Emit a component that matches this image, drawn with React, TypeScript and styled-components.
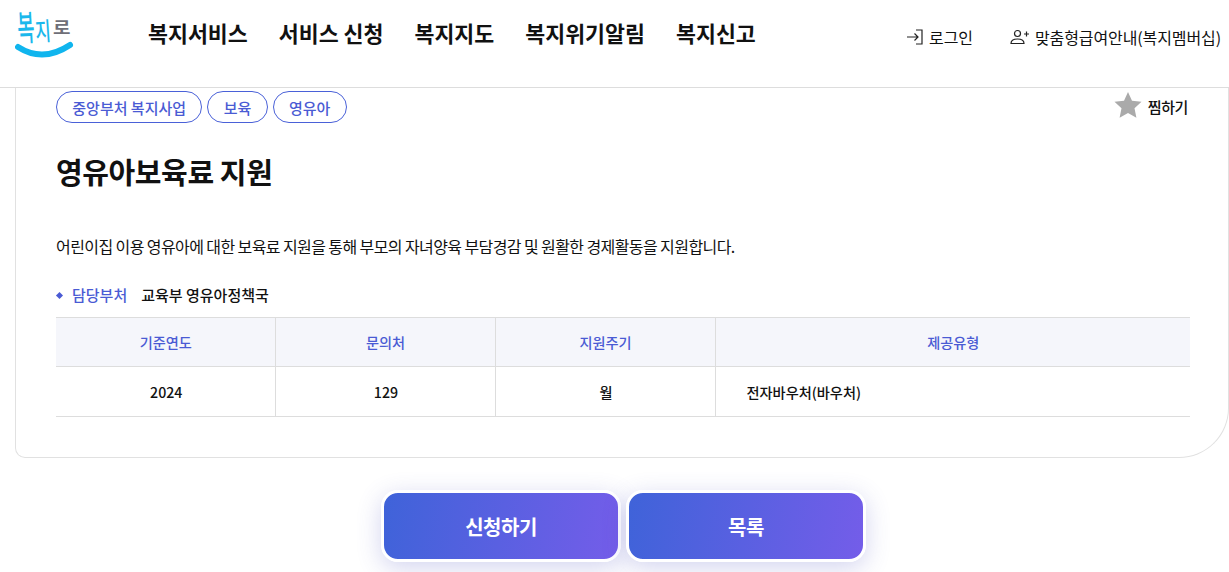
import React from 'react';
import styled, { createGlobalStyle } from 'styled-components';

const GlobalStyle = createGlobalStyle`
    html, body {
        margin: 0;
        height: 100%;
        overflow: hidden;
        background: #fff;
    }

    body {
        color: #111;
        font-family: "Noto Sans CJK KR", "Noto Sans", sans-serif;
    }

    * {
        box-sizing: border-box;
    }
`;

const Header = styled.header`
    align-items: flex-start;
    border-bottom: 1px solid #ddd;
    display: flex;
    height: 88px;
    padding-left: 15px;
`;

const LogoBox = styled.svg`
    display: block;
    flex: none;
    height: 60px;
    margin-right: 74px;
    width: 59px;
`;

const Nav = styled.nav`
    display: flex;
    gap: 31px;
    padding-top: 18px;
`;

const NavItem = styled.a`
    font-size: 21.7px;
    font-weight: 700;
    line-height: 30px;
    white-space: nowrap;
`;

const Utils = styled.div`
    display: flex;
    gap: 37px;
    margin-left: auto;
    padding: 25px 8px 0 0;
`;

const UtilLink = styled.a`
    align-items: center;
    display: flex;
    font-size: 16px;
    gap: 5px;
    height: 24px;
    letter-spacing: -0.1px;
    white-space: nowrap;
`;

const Card = styled.section`
    border: 1px solid #e1e1e1;
    border-radius: 0 0 50px 10px;
    border-top: 0;
    height: 370px;
    margin-left: 15px;
    padding: 3px 39px 0 40px;
`;

const TopRow = styled.div`
    align-items: center;
    display: flex;
    justify-content: space-between;
`;

const Tags = styled.ul`
    display: flex;
    gap: 5px;
    list-style: none;
    margin: 0;
    padding: 0;
`;

const Tag = styled.li`
    align-items: center;
    border: 1px solid #4a61d8;
    border-radius: 16px;
    color: #4a5bd4;
    display: flex;
    font-size: 15px;
    font-weight: 500;
    height: 32px;
    padding: 0 15.3px;
`;

const Bookmark = styled.button`
    align-items: center;
    background: none;
    border: 0;
    color: #111;
    display: flex;
    font-family: inherit;
    font-size: 15px;
    font-weight: 500;
    gap: 6px;
    letter-spacing: -0.4px;
    padding: 0 1px 2px 0;
`;

const Star = styled.svg`
    display: block;
    margin-top: -2px;
`;

const Title = styled.h2`
    font-size: 29px;
    font-weight: 700;
    letter-spacing: -0.4px;
    line-height: 42px;
    margin: 27px 0 0;
`;

const Summary = styled.p`
    font-size: 16px;
    letter-spacing: -0.59px;
    line-height: 22px;
    margin: 43px 0 0;
`;

const Dept = styled.div`
    align-items: center;
    display: flex;
    font-size: 15px;
    font-weight: 500;
    height: 22px;
    margin-top: 26px;
`;

const DeptLabel = styled.strong`
    color: #4a5bd4;
    font-weight: 500;
    margin-right: 14px;
    padding-left: 16px;
    position: relative;

    &::before {
        background: #4a5bd4;
        content: '';
        height: 5px;
        left: 1px;
        position: absolute;
        top: 9px;
        transform: rotate(45deg);
        width: 5px;
    }
`;

const Table = styled.table`
    border-collapse: collapse;
    border-top: 1px solid #ddd;
    margin-top: 12px;
    table-layout: fixed;
    width: 1134px;
`;

const HeadCell = styled.th`
    background: #f5f6fb;
    border-bottom: 1px solid #ddd;
    border-left: 1px solid #ddd;
    color: #4a5bd4;
    font-size: 14.2px;
    font-weight: 500;
    height: 49px;
    padding: 0 0 0 1px;

    &:first-child {
        border-left: 0;
    }
`;

const BodyCell = styled.td<{ $left?: boolean }>`
    border-bottom: 1px solid #ddd;
    border-left: 1px solid #ddd;
    font-size: 14.2px;
    font-weight: 500;
    height: 50px;
    padding: ${props => (props.$left ? '0 0 0 31px' : '0 0 0 2px')};
    text-align: ${props => (props.$left ? 'left' : 'center')};

    &:first-child {
        border-left: 0;
    }
`;

const Actions = styled.div`
    display: flex;
    gap: 5px;
    justify-content: center;
    margin: 32px 0 0 18px;
`;

const ActionButton = styled.button`
    background: linear-gradient(100deg, #3f63d9 0%, #745de9 100%);
    border: 3px solid #fff;
    border-radius: 17px;
    box-shadow: 0 6px 24px rgba(72, 76, 190, 0.24);
    color: #fff;
    font-family: inherit;
    font-size: 20px;
    font-weight: 700;
    height: 72px;
    letter-spacing: -0.5px;
    width: 240px;
`;

const Logo = () => (
    <LogoBox viewBox="0 0 59 60" aria-label="복지로">
        <text transform="translate(3 41) rotate(-3) scale(0.85 1.6)" fontSize="22" fontWeight="500" fill="#1bb8ec">복</text>
        <text transform="translate(21 41) rotate(-4) scale(0.8 1.2)" fontSize="21" fontWeight="500" fill="#1bb8ec">지</text>
        <text transform="translate(38 34) scale(0.95 0.85)" fontSize="20" fontWeight="700" fill="#6f6f78">로</text>
        <path d="M3 47 Q 28 63 55 45" fill="none" stroke="#10b5ee" strokeWidth="6" strokeLinecap="round" />
    </LogoBox>
);

const LoginIcon = () => (
    <svg width="18" height="18" viewBox="0 0 18 18" fill="none" stroke="#222" strokeWidth="1.2">
        <path d="M1 9h11M8.500 5.500 12 9l-3.500 3.500M10 2h6v14h-6" />
    </svg>
);

const UserPlusIcon = () => (
    <svg width="20" height="18" viewBox="0 0 20 18" fill="none" stroke="#222" strokeWidth="1.2">
        <circle cx="7.500" cy="5.500" r="3" />
        <path d="M1 15.500c0-3 3-4.500 6.500-4.500s6.500 1.500 6.500 4.500zM14 6h5M16.500 3.500v5" />
    </svg>
);

const StarIcon = () => (
    <Star width="28" height="28" viewBox="0 0 28 28" fill="#aaa">
        <path d="M14 1l4 8.700 9.500 1.100-7 6.500 1.900 9.400L14 22.100l-8.400 4.600 1.900-9.400-7-6.500 9.500-1.100z" />
    </Star>
);

const navItems = ['복지서비스', '서비스 신청', '복지지도', '복지위기알림', '복지신고'];
const tags = ['중앙부처 복지사업', '보육', '영유아'];

const App = () => (
    <React.Fragment>
        <GlobalStyle />
        <Header>
            <Logo />
            <Nav>
                {navItems.map(item => <NavItem key={item}>{item}</NavItem>)}
            </Nav>
            <Utils>
                <UtilLink><LoginIcon />로그인</UtilLink>
                <UtilLink><UserPlusIcon />맞춤형급여안내(복지멤버십)</UtilLink>
            </Utils>
        </Header>
        <Card>
            <TopRow>
                <Tags>
                    {tags.map(tag => <Tag key={tag}>{tag}</Tag>)}
                </Tags>
                <Bookmark><StarIcon />찜하기</Bookmark>
            </TopRow>
            <Title>영유아보육료 지원</Title>
            <Summary>어린이집 이용 영유아에 대한 보육료 지원을 통해 부모의 자녀양육 부담경감 및 원활한 경제활동을 지원합니다.</Summary>
            <Dept>
                <DeptLabel>담당부처</DeptLabel>
                교육부 영유아정책국
            </Dept>
            <Table>
                <colgroup>
                    <col width="219" />
                    <col width="220" />
                    <col width="220" />
                    <col width="475" />
                </colgroup>
                <thead>
                    <tr>
                        <HeadCell>기준연도</HeadCell>
                        <HeadCell>문의처</HeadCell>
                        <HeadCell>지원주기</HeadCell>
                        <HeadCell>제공유형</HeadCell>
                    </tr>
                </thead>
                <tbody>
                    <tr>
                        <BodyCell>2024</BodyCell>
                        <BodyCell>129</BodyCell>
                        <BodyCell>월</BodyCell>
                        <BodyCell $left>전자바우처(바우처)</BodyCell>
                    </tr>
                </tbody>
            </Table>
        </Card>
        <Actions>
            <ActionButton>신청하기</ActionButton>
            <ActionButton>목록</ActionButton>
        </Actions>
    </React.Fragment>
);

export default App;
